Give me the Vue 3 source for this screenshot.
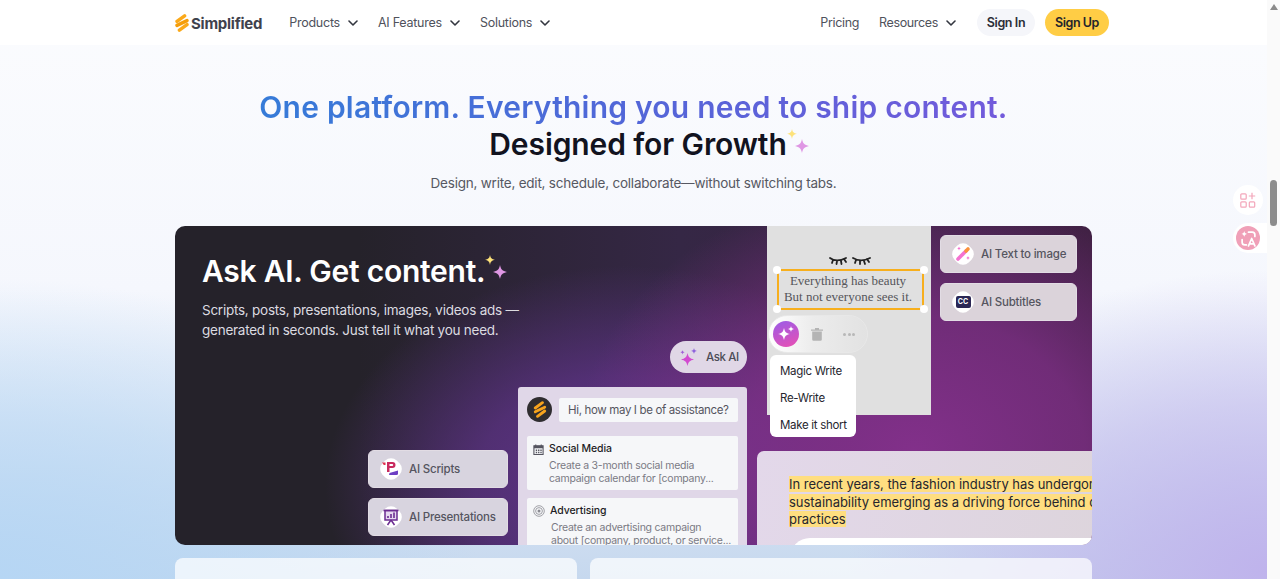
<script setup>
const navLeft = ['Products', 'AI Features', 'Solutions']
</script>

<template>
  <div class="shell">
    <div class="page">
      <header class="nav">
        <div class="nav-inner">
          <div class="brand">
            <svg class="logo" viewBox="0 0 14 18" aria-hidden="true">
              <path d="M9.600 1.800 2 7.400" stroke="#fba919" stroke-width="3.400" stroke-linecap="round" fill="none"/>
              <path d="M12 6.600 2 11.400" stroke="#f59e0b" stroke-width="3.400" stroke-linecap="round" fill="none"/>
              <path d="M12 10.600 4.400 16.200" stroke="#fba919" stroke-width="3.400" stroke-linecap="round" fill="none"/>
            </svg>
            <span class="brand-name">Simplified</span>
          </div>
          <nav class="nav-links">
            <a v-for="item in navLeft" :key="item" class="nav-link">
              {{ item }}
              <svg class="chev" viewBox="0 0 10 6"><path d="M1 1l4 4 4-4" fill="none" stroke="#33363f" stroke-width="1.600" stroke-linecap="round" stroke-linejoin="round"/></svg>
            </a>
          </nav>
          <div class="nav-right">
            <a class="nav-link">Pricing</a>
            <a class="nav-link">Resources
              <svg class="chev" viewBox="0 0 10 6"><path d="M1 1l4 4 4-4" fill="none" stroke="#33363f" stroke-width="1.600" stroke-linecap="round" stroke-linejoin="round"/></svg>
            </a>
            <a class="btn btn-in">Sign In</a>
            <a class="btn btn-up">Sign Up</a>
          </div>
        </div>
      </header>

      <main class="main">
        <h1 class="headline">
          <span class="grad">One platform. Everything you need to ship content.</span>
          <span class="dark">Designed for Growth<svg class="spark-pair" viewBox="0 0 24 34">
            <path d="M5 1c.6 3 1.600 4 5 4.800C6.600 6.600 5.600 7.600 5 11 4.400 7.600 3.400 6.600 0 5.800 3.400 5 4.400 4 5 1Z" fill="#fde27a"/>
            <path d="M15 11c.9 4.500 2.400 6 7 7-4.600 1-6.100 2.500-7 7-.9-4.500-2.400-6-7-7 4.600-1 6.100-2.500 7-7Z" fill="#df97e4"/>
          </svg></span>
        </h1>
        <p class="sub">Design, write, edit, schedule, collaborate—without switching tabs.</p>

        <section class="hero">
          <div class="hero-copy">
            <h2 class="hero-title">Ask AI. Get content.<svg class="spark-pair small" viewBox="0 0 24 34">
              <path d="M5 1c.6 3 1.600 4 5 4.800C6.600 6.600 5.600 7.600 5 11 4.400 7.600 3.400 6.600 0 5.800 3.400 5 4.400 4 5 1Z" fill="#fde27a"/>
              <path d="M15 11c.9 4.500 2.400 6 7 7-4.600 1-6.100 2.500-7 7-.9-4.500-2.400-6-7-7 4.600-1 6.100-2.500 7-7Z" fill="#df97e4"/>
            </svg></h2>
            <p class="hero-text">Scripts, posts, presentations, images, videos ads —<br>generated in seconds. Just tell it what you need.</p>
          </div>

          <div class="poster">
            <svg class="lashes" viewBox="0 0 42 9">
              <path d="M1 2c4 3 10 3 16 0M4 4l-1 3M8 5l-.5 3M12 5l.5 3M15 3l2 3M24 2c5 3 11 3 17 0M27 4l-1 3M31 5v3M35 5l1 3M38 3l2 3" fill="none" stroke="#222" stroke-width="1.800" stroke-linecap="round"/>
            </svg>
            <div class="selection">
              <i class="handle tl"></i><i class="handle tr"></i><i class="handle bl"></i><i class="handle br"></i>
              Everything has beauty<br>But not everyone sees it.
            </div>
            <div class="toolbar">
              <span class="magic">
                <svg viewBox="0 0 26 26" width="26" height="26">
                  <path d="M11 7c.9 4 2 5.100 6 6-4 .9-5.100 2-6 6-.9-4-2-5.100-6-6 4-.9 5.100-2 6-6Z" fill="#fff"/>
                  <path d="M18 5c.4 1.800 1 2.400 3 3-2 .5-2.600 1.200-3 3-.4-1.800-1-2.500-3-3 2-.6 2.600-1.200 3-3Z" fill="#fff"/>
                </svg>
              </span>
              <svg class="trash" viewBox="0 0 12 14"><path d="M0 2.500h12v1.200H0zM4 1h4v1.500H4zM1.200 4.500h9.600v8a1.300 1.300 0 0 1-1.300 1.300h-7a1.300 1.300 0 0 1-1.300-1.300z" fill="#b4b4b4"/></svg>
              <span class="dots"><i></i><i></i><i></i></span>
            </div>
          </div>
          <ul class="menu">
            <li>Magic Write</li>
            <li>Re-Write</li>
            <li>Make it short</li>
          </ul>

          <div class="ask">
            <svg viewBox="0 0 18 18" width="18" height="18">
              <path d="M7.500 5c1 4.200 2.300 5.500 6.500 6.500-4.200 1-5.500 2.300-6.500 6.500-1-4.200-2.300-5.500-6.500-6.500 4.200-1 5.500-2.300 6.500-6.500Z" fill="#d24bd0"/>
              <path d="M2.500 2c.3 1.500.8 2 2.300 2.300C3.300 4.600 2.800 5.100 2.500 6.600 2.200 5.100 1.700 4.600.2 4.300 1.700 4 2.200 3.500 2.500 2Z" fill="#a05cd8"/>
              <path d="M14 0c.4 1.900 1 2.500 3 3-2 .4-2.600 1-3 3-.4-2-1-2.600-3-3 2-.5 2.600-1.100 3-3Z" fill="#8f63dc"/>
            </svg>
            Ask AI
          </div>

          <div class="tool t-image">
            <span class="tool-ic">
              <svg viewBox="0 0 18 18" width="18" height="18">
                <path d="M4 14 12 6" stroke="#f472d0" stroke-width="3.600" stroke-linecap="round"/>
                <path d="M12 6 14 4" stroke="#fb923c" stroke-width="3.600" stroke-linecap="round"/>
                <path d="M5 1.500c.3 1.300.7 1.700 2 2-1.300.3-1.700.7-2 2-.3-1.300-.7-1.700-2-2 1.300-.3 1.700-.7 2-2ZM14 11c.3 1.300.7 1.700 2 2-1.300.3-1.700.7-2 2-.3-1.300-.7-1.700-2-2 1.300-.3 1.700-.7 2-2Z" fill="#f472d0"/>
              </svg>
            </span>AI Text to image
          </div>
          <div class="tool t-subs">
            <span class="tool-ic"><span class="cc">CC</span></span>AI Subtitles
          </div>
          <div class="tool t-scripts">
            <span class="tool-ic">
              <svg viewBox="0 0 20 18" width="20" height="18">
                <path d="M1 2.500h3.500V5H2.800z" fill="#e0304e"/>
                <path d="M6 2h5.500a3 3 0 0 1 0 6H8.500v4H6zM8.500 4v2h2.700a1 1 0 0 0 0-2z" fill="#c92a5e"/>
                <path d="M8.500 13 17 10.500v3A1.500 1.500 0 0 1 15.500 15H8z" fill="#6d3fc4"/>
              </svg>
            </span>AI Scripts
          </div>
          <div class="tool t-pres">
            <span class="tool-ic">
              <svg viewBox="0 0 18 18" width="18" height="18">
                <path d="M3 2.500h12v9.500H3z" fill="#e6d8f0" stroke="#6b2c91" stroke-width="1.500"/>
                <path d="M1.500 2.500h15" stroke="#6b2c91" stroke-width="1.600"/>
                <path d="M6 10V8M9 10V6M12 10V4.500" stroke="#6b2c91" stroke-width="1.600"/>
                <path d="M9 12 5.500 17M9 12l3.500 5" stroke="#6b2c91" stroke-width="1.500"/>
              </svg>
            </span>AI Presentations
          </div>

          <div class="chat">
            <div class="chat-top">
              <span class="avatar">
                <svg viewBox="0 0 14 18" width="14" height="17">
                  <path d="M9.600 1.800 2 7.400" stroke="#f7a41d" stroke-width="3" stroke-linecap="round"/>
                  <path d="M12 6.600 2 11.400" stroke="#f7a41d" stroke-width="3" stroke-linecap="round"/>
                  <path d="M12 10.600 4.400 16.200" stroke="#f7a41d" stroke-width="3" stroke-linecap="round"/>
                </svg>
              </span>
              <div class="bubble">Hi, how may I be of assistance?</div>
            </div>
            <article class="prompt">
              <h3>
                <svg viewBox="0 0 12 12" width="11" height="11"><path d="M1 2h10v9.500H1zM3 .5v2M9 .5v2" fill="none" stroke="#555560" stroke-width="1.200"/><path d="M1 2h10v2.500H1zM3 6h1.500v1.500H3zM5.500 6H7v1.500H5.500zM8 6h1.500v1.500H8zM3 8.500h1.500V10H3zM5.500 8.500H7V10H5.500zM8 8.500h1.500V10H8z" fill="#555560"/></svg>
                Social Media
              </h3>
              <p>Create a 3-month social media<br>campaign calendar for [company...</p>
            </article>
            <article class="prompt second">
              <h3>
                <svg viewBox="0 0 12 12" width="12" height="12"><circle cx="6" cy="6" r="5.300" fill="none" stroke="#8a8a92" stroke-width=".8"/><circle cx="6" cy="6" r="3.400" fill="none" stroke="#8a8a92" stroke-width=".8"/><circle cx="6" cy="6" r="1.500" fill="#8a8a92"/></svg>
                Advertising
              </h3>
              <p>Create an advertising campaign<br>about [company, product, or service...</p>
            </article>
          </div>

          <div class="article">
            <p class="marked"><mark>In recent years, the fashion industry has undergone a radical change, with</mark></p>
            <p class="marked"><mark>sustainability emerging as a driving force behind consumer choices and</mark></p>
            <p class="marked"><mark>practices</mark></p>
            <div class="article-input"></div>
          </div>
        </section>

        <div class="lower">
          <div class="lower-card"></div>
          <div class="lower-card"></div>
        </div>
      </main>

      <aside class="float">
        <span class="float-btn">
          <svg viewBox="0 0 16 16" width="16" height="16" fill="none" stroke="#f3a6ba" stroke-width="1.200">
            <rect x=".8" y="1.800" width="5.400" height="5.400" rx="1"/>
            <rect x=".8" y="9.800" width="5.400" height="5.400" rx="1"/>
            <rect x="9.300" y="9.800" width="5.400" height="5.400" rx="1"/>
            <path d="M12 .8v6.400M8.800 4h6.400"/>
          </svg>
        </span>
        <span class="float-btn tail">
          <span class="translate">
            <svg viewBox="0 0 16 16" width="17" height="17" fill="none" stroke="#fff" stroke-width="1.600" stroke-linecap="round" stroke-linejoin="round">
              <path d="M4 1c.4 1.700 1 2.300 2.700 2.700C5 4.100 4.400 4.700 4 6.400 3.600 4.700 3 4.100 1.300 3.700 3 3.300 3.600 2.700 4 1Z" fill="#fff" stroke="none"/>
              <path d="M8 2h3.500A2.500 2.500 0 0 1 14 4.500V6M2 9v2.500A2.500 2.500 0 0 0 4.500 14H6"/>
              <path d="M8 15l3-7 3 7M9 13h4"/>
            </svg>
          </span>
        </span>
      </aside>
    </div>

    <div class="scrollbar">
      <i class="arrow"></i>
      <i class="thumb"></i>
    </div>
  </div>
</template>

<style>
html, body { margin: 0; padding: 0; overflow: hidden; }
</style>

<style scoped>
.shell {
  display: flex;
  height: 579px;
  overflow: hidden;
  font-family: Inter, "Noto Sans", sans-serif;
  color: #1f2230;
}
.page {
  position: relative;
  flex: 1;
  min-width: 0;
  display: flex;
  flex-direction: column;
  background:
    radial-gradient(ellipse 420px 300px at 1267px 570px, #bfb3ec 0%, rgba(194,182,236,.55) 55%, rgba(194,182,236,0) 100%),
    radial-gradient(ellipse 480px 300px at 0 579px, #b6d6f4 0%, rgba(180,214,244,.5) 55%, rgba(180,214,244,0) 100%),
    linear-gradient(180deg, #fbfcfe 0%, #f5f7fd 50%, #c6d8ee 100%);
}
.scrollbar {
  width: 13px;
  flex: none;
  background: #fafafa;
  display: flex;
  flex-direction: column;
  align-items: center;
}
.arrow {
  width: 0;
  height: 0;
  margin-top: 4px;
  border-left: 4px solid transparent;
  border-right: 4px solid transparent;
  border-bottom: 6px solid #8a8a8a;
}
.thumb {
  width: 7px;
  height: 46px;
  margin-top: 170px;
  border-radius: 4px;
  background: #8c8c8c;
}

/* nav */
.nav {
  height: 45px;
  flex: none;
  background: #fff;
}
.nav-inner {
  display: flex;
  align-items: center;
  height: 100%;
  padding: 0 158px 0 175px;
}
.brand { display: flex; align-items: center; gap: 2px; }
.logo { width: 14px; height: 18px; }
.brand-name {
  padding-top: 1px;
  font-size: 15px;
  font-weight: 700;
  letter-spacing: -.25px;
  color: #3f424d;
}
.nav-links { display: flex; gap: 20px; margin-left: 27px; }
.nav-right { display: flex; align-items: center; gap: 20px; margin-left: auto; }
.nav-link {
  display: inline-flex;
  align-items: center;
  gap: 8px;
  font-size: 12.500px;
  letter-spacing: -.25px;
  color: #4f525c;
  white-space: nowrap;
}
.nav-right .nav-link { letter-spacing: -.35px; }
.chev { width: 10px; height: 6px; }
.btn {
  display: inline-flex;
  align-items: center;
  justify-content: center;
  height: 27px;
  border-radius: 14px;
  font-size: 12.500px;
  font-weight: 600;
}
.btn-in { width: 58px; background: #f5f6fa; color: #2c2e38; letter-spacing: -.4px; margin-right: -10px; margin-left: 1px; }
.btn-up { width: 64px; background: #ffcd45; color: #23242c; letter-spacing: -.45px; }

/* heading */
.main {
  width: 917px;
  margin: 0 auto;
  display: flex;
  flex-direction: column;
  align-items: stretch;
}
.headline {
  margin: 44px 0 0;
  font-size: 30px;
  line-height: 37px;
  font-weight: 600;
  text-align: center;
}
.headline span { display: block; white-space: nowrap; }
.grad {
  background: linear-gradient(90deg, #2f80d8 0%, #5266d8 50%, #7a58dc 100%);
  -webkit-background-clip: text;
  background-clip: text;
  color: transparent;
  letter-spacing: .22px;
}
.dark { color: #12131f; letter-spacing: -.1px; }
.spark-pair { width: 24px; height: 34px; vertical-align: -7px; margin-right: -33px; }
.sub {
  margin: 10px 0 0;
  font-size: 13.500px;
  line-height: 20px;
  letter-spacing: -.22px;
  text-align: center;
  color: #565862;
}

/* hero */
.hero {
  position: relative;
  height: 319px;
  margin-top: 33px;
  flex: none;
  overflow: hidden;
  border-radius: 10px;
  color: #fff;
  background:
    radial-gradient(ellipse 340px 270px at 740px 225px, #82308a 0%, rgba(130,48,138,.75) 50%, rgba(130,48,138,0) 100%),
    radial-gradient(ellipse 300px 220px at 450px 260px, #61348c 0%, rgba(97,52,140,.7) 50%, rgba(97,52,140,0) 100%),
    linear-gradient(90deg, #25222a 0%, #25222a 20%, #352745 55%, #3d2040 100%);
}
.hero-copy { padding: 27px 0 0 27px; }
.hero-title {
  margin: 0;
  font-size: 30px;
  line-height: 36px;
  font-weight: 600;
  letter-spacing: -.25px;
  white-space: nowrap;
}
.spark-pair.small { vertical-align: -6px; }
.hero-text {
  margin: 11px 0 0;
  font-size: 13.500px;
  line-height: 20px;
  letter-spacing: -.25px;
  color: #dcdbe0;
}

/* collage */
.poster {
  position: absolute;
  left: 592px;
  top: 0;
  width: 164px;
  height: 189px;
  background: #e0e0e0;
}
.lashes { position: absolute; left: 62px; top: 30px; width: 42px; height: 9px; }
.selection {
  position: absolute;
  left: 10px;
  top: 43px;
  width: 147px;
  height: 41px;
  box-sizing: border-box;
  border: 2px solid #f7af1d;
  text-align: center;
  font-family: "Liberation Serif", serif;
  font-size: 13px;
  line-height: 16px;
  padding: 2px 5px 0 0;
  color: #55555a;
  white-space: nowrap;
}
.handle {
  position: absolute;
  width: 8px;
  height: 8px;
  border-radius: 50%;
  background: #fff;
}
.tl { left: -6px; top: -5px; }
.tr { right: -6px; top: -5px; }
.bl { left: -6px; bottom: -5px; }
.br { right: -6px; bottom: -5px; }
.toolbar {
  position: absolute;
  left: 1px;
  top: 89px;
  width: 100px;
  height: 38px;
  box-sizing: border-box;
  display: flex;
  align-items: center;
  padding-left: 4px;
  border-radius: 19px;
  border: 1px solid #e8e8e8;
  background: linear-gradient(90deg, #fff 0%, #ececec 45%, #e2e2e2 100%);
}
.magic {
  width: 26px;
  height: 26px;
  border-radius: 50%;
  background: linear-gradient(160deg, #9a5ce8 0%, #ea4fb2 100%);
}
.magic svg { display: block; }
.trash { width: 12px; height: 14px; margin-left: 12px; }
.dots { display: flex; gap: 1.500px; margin-left: 20px; }
.dots i { width: 3px; height: 3px; border-radius: 50%; background: #b8b8b8; }
.menu {
  position: absolute;
  left: 595px;
  top: 129px;
  width: 86px;
  height: 82px;
  margin: 0;
  padding: 3px 0 0 10px;
  box-sizing: border-box;
  list-style: none;
  background: #fff;
  border-radius: 6px;
  color: #26262e;
  font-size: 11.500px;
  letter-spacing: -.3px;
}
.menu li { height: 27px; line-height: 27px; white-space: nowrap; }
.ask {
  position: absolute;
  left: 495px;
  top: 115px;
  width: 77px;
  height: 32px;
  box-sizing: border-box;
  display: flex;
  align-items: center;
  gap: 8px;
  padding-left: 10px;
  border-radius: 16px;
  background: #e0d7e6;
  color: #4c4c56;
  font-size: 11.500px;
  font-weight: 500;
  letter-spacing: -.4px;
}
.tool {
  position: absolute;
  display: flex;
  align-items: center;
  gap: 5px;
  height: 38px;
  box-sizing: border-box;
  padding-left: 9px;
  border: 1px solid #e2dce4;
  border-radius: 6px;
  background: #dbd3da;
  color: #55555f;
  font-size: 11.500px;
  font-weight: 500;
  letter-spacing: -.2px;
  white-space: nowrap;
}
.tool-ic {
  position: relative;
  width: 26px;
  height: 26px;
  flex: none;
  display: flex;
  align-items: center;
  justify-content: center;
}
.tool-ic::before {
  content: "";
  position: absolute;
  left: 3px;
  top: 3px;
  width: 20px;
  height: 20px;
  background: #fff;
  border-radius: 8px;
  transform: rotate(45deg);
}
.tool-ic > * { position: relative; }
.t-image { left: 765px; top: 9px; width: 137px; }
.t-subs { left: 765px; top: 57px; width: 137px; }
.t-scripts { left: 193px; top: 224px; width: 140px; background: #d8d4df; }
.t-pres { left: 193px; top: 272px; width: 140px; background: #d8d4df; }
.cc {
  display: block;
  width: 15px;
  height: 12px;
  border-radius: 2px;
  background: #2b2755;
  color: #fff;
  font-size: 7px;
  line-height: 12px;
  font-weight: 700;
  letter-spacing: 0;
  text-align: center;
}

/* chat */
.chat {
  position: absolute;
  left: 343px;
  top: 161px;
  width: 229px;
  height: 180px;
  box-sizing: border-box;
  padding: 10px 9px;
  background: #e0d7e8;
  border-radius: 3px;
  color: #26262e;
}
.chat-top { display: flex; align-items: center; gap: 7px; }
.avatar {
  width: 25px;
  height: 25px;
  flex: none;
  display: flex;
  align-items: center;
  justify-content: center;
  border-radius: 50%;
  background: #2f2d30;
}
.bubble {
  flex: 1;
  height: 24px;
  box-sizing: border-box;
  padding-left: 9px;
  line-height: 24px;
  background: #f6f7f9;
  border-radius: 2px;
  color: #55555f;
  font-size: 11.500px;
  letter-spacing: -.35px;
  white-space: nowrap;
}
.prompt {
  height: 54px;
  margin-top: 14px;
  padding: 6px 0 0 6px;
  box-sizing: border-box;
  background: #f6f7f9;
  border-radius: 2px;
}
.prompt.second { margin-top: 8px; height: 70px; }
.prompt h3 {
  display: flex;
  align-items: center;
  gap: 5px;
  margin: 0;
  font-size: 10.500px;
  line-height: 14px;
  font-weight: 500;
  letter-spacing: -.1px;
  color: #1e1e26;
}
.prompt p {
  margin: 3px 0 0 16px;
  font-size: 10.500px;
  line-height: 13px;
  letter-spacing: -.25px;
  color: #7a7a84;
  white-space: nowrap;
}
.prompt.second p { margin-left: 18px; }

/* article */
.article {
  position: absolute;
  left: 582px;
  top: 225px;
  width: 400px;
  height: 100px;
  box-sizing: border-box;
  padding-top: 25px;
  padding-left: 32px;
  border-radius: 7px;
  background: linear-gradient(100deg, #e3d8ea 0%, #dcd4da 100%);
  color: #26262e;
  font-size: 13px;
  letter-spacing: -.03px;
}
.marked { margin: 0; height: 17.500px; line-height: 17.500px; white-space: nowrap; }
mark { background: #ffde80; color: inherit; }
.article-input {
  position: absolute;
  left: 33px;
  top: 87px;
  width: 363px;
  height: 30px;
  background: #fff;
  border-radius: 20px 0 0 0;
}

/* lower */
.lower {
  display: grid;
  grid-template-columns: 402px 502px;
  gap: 13px;
  margin-top: 13px;
}
.lower-card {
  height: 60px;
  border-radius: 8px;
  background: rgba(255, 255, 255, .72);
}

/* float */
.float {
  position: absolute;
  right: 0;
  top: 185px;
  display: flex;
  flex-direction: column;
  gap: 8px;
  align-items: flex-end;
}
.float-btn {
  width: 30px;
  height: 30px;
  margin-right: 4px;
  border-radius: 50%;
  background: #fff;
  display: flex;
  align-items: center;
  justify-content: center;
}
.float-btn.tail {
  width: 34px;
  margin-right: 0;
  justify-content: flex-start;
  padding-left: 3px;
  box-sizing: border-box;
  border-radius: 15px 0 0 15px;
}
.translate {
  width: 24px;
  height: 24px;
  border-radius: 50%;
  background: #f0a0b8;
  display: flex;
  align-items: center;
  justify-content: center;
}
</style>
